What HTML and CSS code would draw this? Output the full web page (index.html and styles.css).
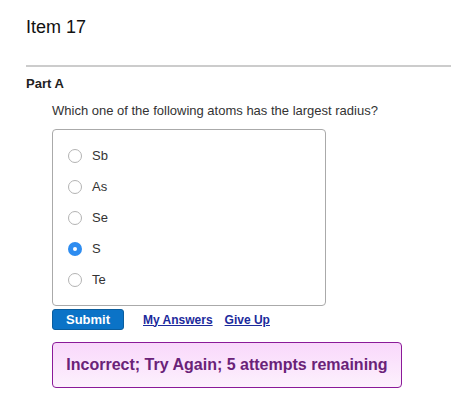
FILE: index.html
```html
<!DOCTYPE html>
<html>
<head>
<meta charset="utf-8">
<link rel="stylesheet" href="styles.css">
</head>
<body>
<div class="page">
  <h1 class="item-title">Item 17</h1>
  <hr class="divider">
  <section class="part">
    <h2 class="part-title">Part A</h2>
    <div class="part-body">
      <p class="question">Which one of the following atoms has the largest radius?</p>
      <div class="choices">
        <div class="choice"><span class="radio"></span><span class="label">Sb</span></div>
        <div class="choice"><span class="radio"></span><span class="label">As</span></div>
        <div class="choice"><span class="radio"></span><span class="label">Se</span></div>
        <div class="choice"><span class="radio checked"></span><span class="label">S</span></div>
        <div class="choice"><span class="radio"></span><span class="label">Te</span></div>
      </div>
      <div class="actions">
        <button class="submit">Submit</button>
        <a class="link" href="#">My Answers</a>
        <a class="link" href="#">Give Up</a>
      </div>
      <div class="feedback">Incorrect; Try Again; 5 attempts remaining</div>
    </div>
  </section>
</div>
</body>
</html>
```
FILE: styles.css
```css
html, body {
  margin: 0;
  padding: 0;
  background: #fff;
}
body {
  font-family: "Liberation Sans", Arial, Helvetica, sans-serif;
  color: #222;
}
.page {
  padding-left: 26px;
  padding-top: 14px;
}
.item-title {
  margin: 0;
  font-size: 18px;
  font-weight: normal;
  line-height: 26px;
  color: #111;
}
.divider {
  margin: 25px 0 0 0;
  border: 0;
  height: 2px;
  background: #cccccc;
}
.part-title {
  margin: 9px 0 0 0;
  font-size: 13px;
  font-weight: bold;
  line-height: 16px;
  color: #222;
}
.part-body {
  padding-left: 26px;
}
.question {
  margin: 10px 0 0 0;
  font-size: 13px;
  line-height: 18px;
  color: #333;
}
.choices {
  margin-top: 9px;
  width: 272px;
  border: 1px solid #aaaaaa;
  border-radius: 4px;
  padding: 10px 0;
}
.choice {
  height: 31px;
  display: flex;
  align-items: center;
  padding-left: 15px;
}
.radio {
  box-sizing: border-box;
  width: 14px;
  height: 14px;
  border: 1px solid #b3b3b3;
  border-radius: 50%;
  background: #fff;
  flex: none;
  position: relative;
}
.radio.checked {
  border: none;
  background: #2d8cf0;
}
.radio.checked::after {
  content: "";
  position: absolute;
  left: 5px;
  top: 5px;
  width: 4px;
  height: 4px;
  border-radius: 50%;
  background: #fff;
}
.label {
  margin-left: 10px;
  font-size: 13px;
  color: #333;
}
.actions {
  margin-top: 3px;
  display: flex;
  align-items: center;
  height: 21px;
}
.submit {
  box-sizing: border-box;
  width: 72px;
  height: 21px;
  padding: 0;
  border: 1px solid #0a5d9e;
  border-radius: 3px;
  background: #0b73c7;
  color: #fff;
  font-family: "Liberation Sans", Arial, sans-serif;
  font-size: 13px;
  font-weight: bold;
}
.link {
  font-size: 12px;
  font-weight: bold;
  color: #1c2a9c;
  text-decoration: underline;
  margin-left: 19px;
}
.link + .link {
  margin-left: 12px;
}
.feedback {
  margin-top: 12px;
  box-sizing: border-box;
  width: 350px;
  height: 46px;
  border: 1px solid #8b1a99;
  border-radius: 4px;
  background: linear-gradient(#f9d8fb, #fdf1fd);
  color: #6a2278;
  font-size: 16px;
  font-weight: bold;
  display: flex;
  align-items: center;
  justify-content: center;
}
```
